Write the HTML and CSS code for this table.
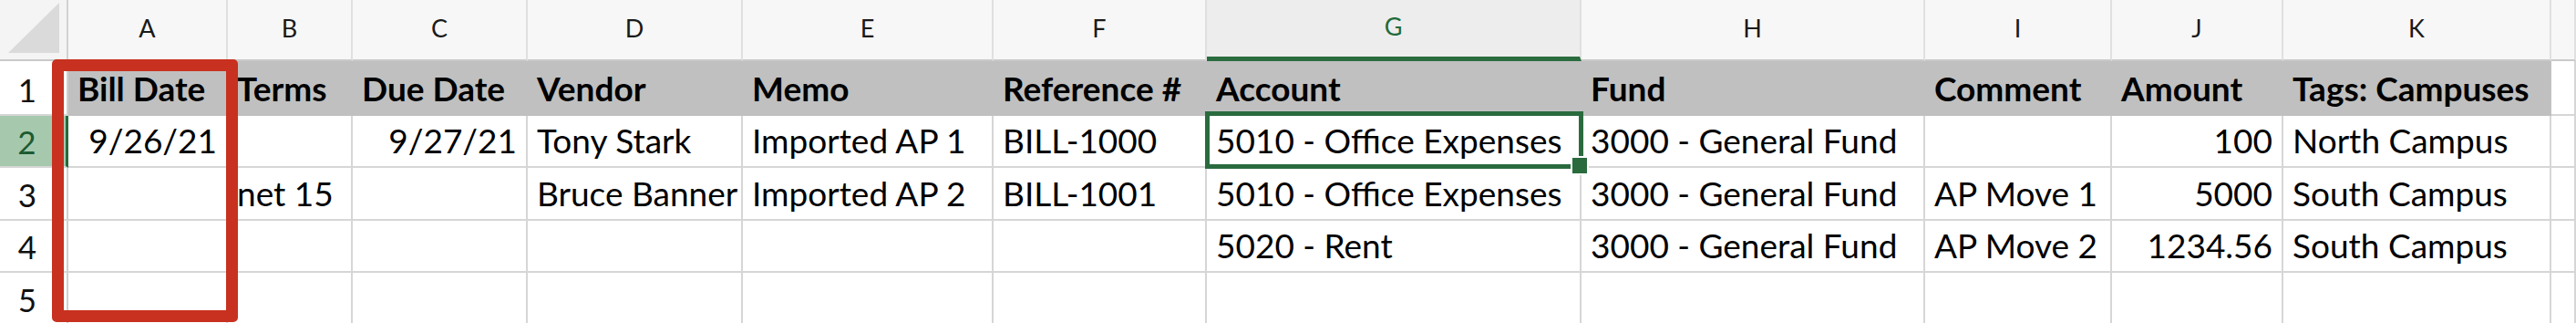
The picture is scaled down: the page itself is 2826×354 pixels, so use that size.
FILE: index.html
```html
<!DOCTYPE html>
<html lang="en">
<head>
<meta charset="utf-8">
<title>Bills import sheet</title>
<link rel="stylesheet" href="styles.css">
</head>
<body>
<div class="sheet">
  <div class="grid">
    <div class="corner"><svg class="corner-tri" width="75" height="67" viewBox="0 0 75 67"><polygon points="9,58 65,58 65,3" fill="#dadada"/></svg></div>
    <div class="colhead">A</div>
    <div class="colhead">B</div>
    <div class="colhead">C</div>
    <div class="colhead">D</div>
    <div class="colhead">E</div>
    <div class="colhead">F</div>
    <div class="colhead sel">G</div>
    <div class="colhead">H</div>
    <div class="colhead">I</div>
    <div class="colhead">J</div>
    <div class="colhead">K</div>
    <div class="colhead"></div>

    <div class="rowhead">1</div>
    <div class="cell hdr">Bill Date</div>
    <div class="cell hdr">Terms</div>
    <div class="cell hdr">Due Date</div>
    <div class="cell hdr">Vendor</div>
    <div class="cell hdr">Memo</div>
    <div class="cell hdr">Reference #</div>
    <div class="cell hdr">Account</div>
    <div class="cell hdr">Fund</div>
    <div class="cell hdr">Comment</div>
    <div class="cell hdr">Amount</div>
    <div class="cell hdr">Tags: Campuses</div>
    <div class="cell"></div>

    <div class="rowhead sel">2</div>
    <div class="cell num">9/26/21</div>
    <div class="cell"></div>
    <div class="cell num">9/27/21</div>
    <div class="cell">Tony Stark</div>
    <div class="cell">Imported AP 1</div>
    <div class="cell">BILL-1000</div>
    <div class="cell active">5010 - Office Expenses</div>
    <div class="cell">3000 - General Fund</div>
    <div class="cell"></div>
    <div class="cell num">100</div>
    <div class="cell">North Campus</div>
    <div class="cell"></div>

    <div class="rowhead">3</div>
    <div class="cell"></div>
    <div class="cell">net 15</div>
    <div class="cell"></div>
    <div class="cell">Bruce Banner</div>
    <div class="cell">Imported AP 2</div>
    <div class="cell">BILL-1001</div>
    <div class="cell">5010 - Office Expenses</div>
    <div class="cell">3000 - General Fund</div>
    <div class="cell">AP Move 1</div>
    <div class="cell num">5000</div>
    <div class="cell">South Campus</div>
    <div class="cell"></div>

    <div class="rowhead">4</div>
    <div class="cell"></div>
    <div class="cell"></div>
    <div class="cell"></div>
    <div class="cell"></div>
    <div class="cell"></div>
    <div class="cell"></div>
    <div class="cell">5020 - Rent</div>
    <div class="cell">3000 - General Fund</div>
    <div class="cell">AP Move 2</div>
    <div class="cell num">1234.56</div>
    <div class="cell">South Campus</div>
    <div class="cell"></div>

    <div class="rowhead">5</div>
    <div class="cell"></div>
    <div class="cell"></div>
    <div class="cell"></div>
    <div class="cell"></div>
    <div class="cell"></div>
    <div class="cell"></div>
    <div class="cell"></div>
    <div class="cell"></div>
    <div class="cell"></div>
    <div class="cell"></div>
    <div class="cell"></div>
    <div class="cell"></div>
  </div>
  <div class="callout"></div>
</div>
</body>
</html>
```

FILE: styles.css
```css
html, body {
  margin: 0;
  padding: 0;
  background: #ffffff;
}

body {
  width: 2826px;
  height: 354px;
  overflow: hidden;
  font-family: Lato, "Open Sans", "Liberation Sans", sans-serif;
  color: #000;
}

.sheet {
  position: relative;
  width: 2826px;
  height: 354px;
  overflow: hidden;
}

.grid {
  display: grid;
  grid-template-columns: 75px 175px 137px 192px 236px 275px 234px 411px 377px 205px 188px 294px 1fr;
  grid-template-rows: 67px 60px 57px 58px 57px 58px;
}

.grid > div {
  box-sizing: border-box;
  min-width: 0;
}

.corner {
  background: #f4f4f4;
  border-right: 2px solid #d2d2d2;
  border-bottom: 2px solid #c9c9c9;
}

.corner-tri {
  display: block;
}

.colhead {
  display: flex;
  align-items: center;
  justify-content: center;
  padding-bottom: 5px;
  background: #f7f7f7;
  border-right: 2px solid #e0e0e0;
  border-bottom: 2px solid #c9c9c9;
  font-size: 27px;
  color: #1a1a1a;
}

.colhead.sel {
  background: #ededed;
  color: #1f6b3a;
  border-bottom: 5px solid #2a6b3e;
}

.rowhead {
  display: flex;
  align-items: flex-end;
  justify-content: center;
  padding: 0 13px 6px 0;
  background: #ffffff;
  border-right: 2px solid #d0d0d0;
  border-bottom: 2px solid #d6d6d6;
  font-size: 35px;
  color: #111;
}

.rowhead.sel {
  background: #a6c9ae;
  color: #1c5a31;
  border-right: 3px solid #256a3b;
}

.cell {
  display: flex;
  align-items: flex-end;
  padding: 0 10px 6px 10px;
  border-right: 2px solid #d6d6d6;
  border-bottom: 2px solid #d6d6d6;
  white-space: nowrap;
  overflow: hidden;
  font-size: 37px;
  background: #ffffff;
}

.cell.hdr {
  background: #c0c0c0;
  border-right-color: #c0c0c0;
  border-bottom-color: #c0c0c0;
  font-weight: 700;
}

.cell.num {
  justify-content: flex-end;
}

.cell.active {
  position: relative;
  overflow: visible;
}

.cell.active::before {
  content: "";
  position: absolute;
  top: -5px;
  left: -2px;
  right: -4px;
  bottom: -3px;
  border: 5px solid #2a6b3e;
}

.cell.active::after {
  content: "";
  position: absolute;
  right: -10px;
  bottom: -10px;
  width: 16px;
  height: 17px;
  background: #2a6b3e;
  border: 2px solid #ffffff;
}

.callout {
  position: absolute;
  left: 57px;
  top: 65px;
  width: 204px;
  height: 288px;
  box-sizing: border-box;
  border: 13px solid #c8311f;
  border-radius: 5px;
}
```
